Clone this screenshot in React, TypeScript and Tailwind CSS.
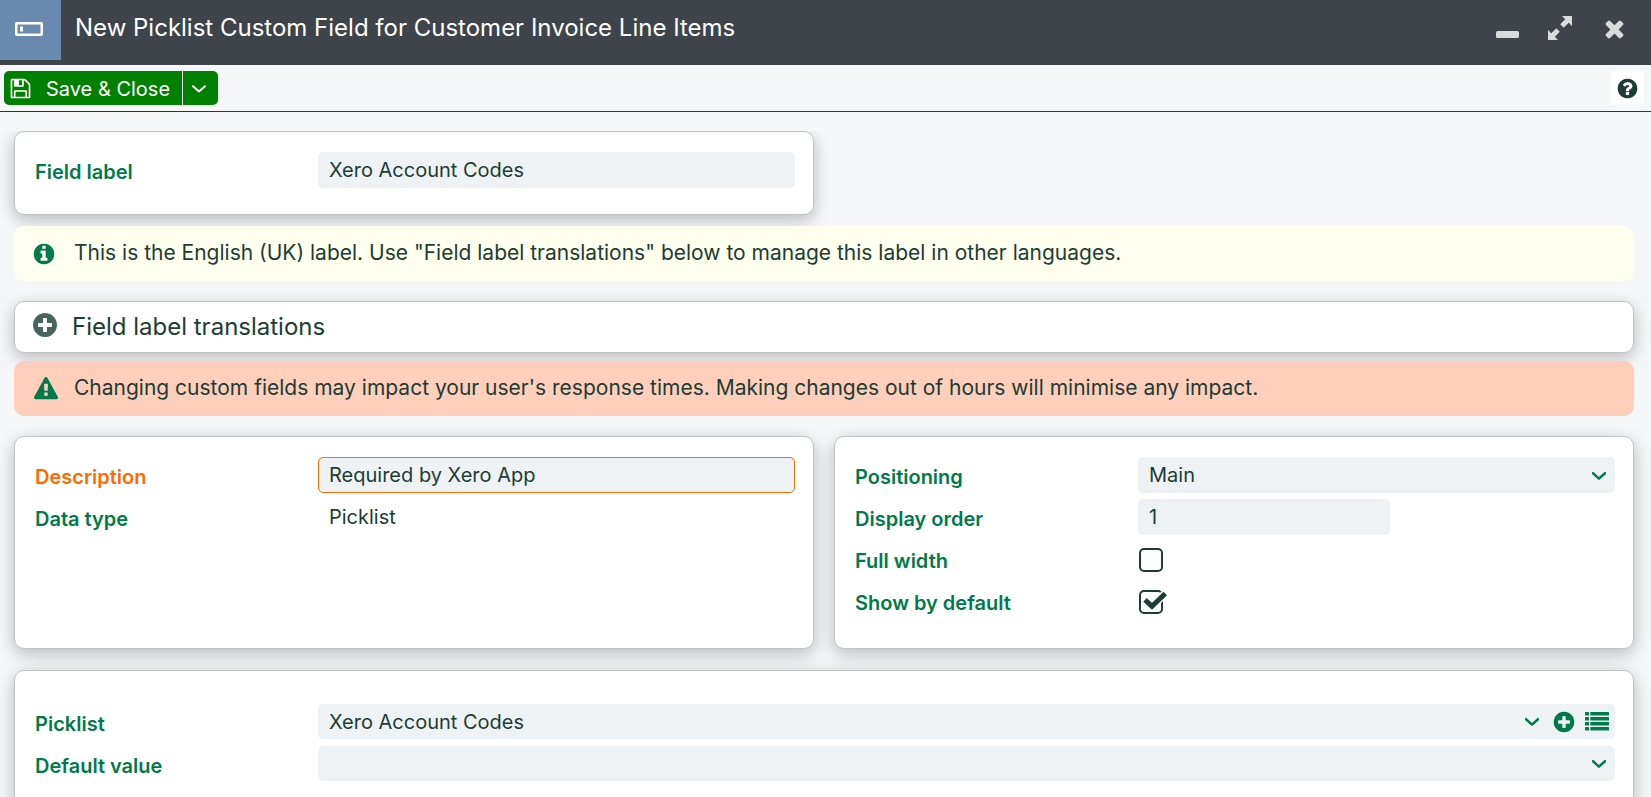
import React, { useState } from "react";

const CIRCLE =
  "q0 209-103 385.500t-279.500 279.500-385.500 103-385.500-103-279.500-279.500-103-385.500 103-385.500 279.500-279.500 385.500-103 385.500 103 279.500 279.500 103 385.500z";

const ICONS = {
  times:
    "M1490 1322q0 40-28 68l-136 136q-28 28-68 28t-68-28l-294-294-294 294q-28 28-68 28t-68-28l-136-136q-28-28-28-68t28-68l294-294-294-294q-28-28-28-68t28-68l136-136q28-28 68-28t68 28l294 294 294-294q28-28 68-28t68 28l136 136q28 28 28 68t-28 68l-294 294 294 294q28 28 28 68z",
  save: "M512 1536h768v-384h-768v384zm896 0h128v-896q0-14-10-38.500t-20-34.500l-281-281q-10-10-34-20t-39-10v416q0 40-28 68t-68 28h-576q-40 0-68-28t-28-68v-416h-128v1280h128v-416q0-40 28-68t68-28h832q40 0 68 28t28 68v416zm-384-928v-320q0-13-9.500-22.500t-22.500-9.500h-192q-13 0-22.500 9.500t-9.500 22.500v320q0 13 9.500 22.500t22.500 9.500h192q13 0 22.500-9.500t9.500-22.500zm640 32v928q0 40-28 68t-68 28h-1344q-40 0-68-28t-28-68v-1344q0-40 28-68t68-28h928q40 0 88 20t76 48l280 280q28 28 48 76t20 88z",
  info:
    "M1152 1376v-160q0-14-9-23t-23-9h-96v-512q0-14-9-23t-23-9h-320q-14 0-23 9t-9 23v160q0 14 9 23t23 9h96v320h-96q-14 0-23 9t-9 23v160q0 14 9 23t23 9h448q14 0 23-9t9-23zm-128-896v-160q0-14-9-23t-23-9h-192q-14 0-23 9t-9 23v160q0 14 9 23t23 9h192q14 0 23-9t9-23zm640 416" +
    CIRCLE,
  plus:
    "M1344 960v-128q0-26-19-45t-45-19h-256v-256q0-26-19-45t-45-19h-128q-26 0-45 19t-19 45v256h-256q-26 0-45 19t-19 45v128q0 26 19 45t45 19h256v256q0 26 19 45t45 19h128q26 0 45-19t19-45v-256h256q26 0 45-19t19-45zm320-64" +
    CIRCLE,
  help:
    "M1024 1376v-192q0-14-9-23t-23-9h-192q-14 0-23 9t-9 23v192q0 14 9 23t23 9h192q14 0 23-9t9-23zm256-672q0-88-55.500-163t-138.500-116-170-41q-243 0-371 213-15 24 8 42l132 100q7 6 19 6 16 0 25-12 53-68 86-92 34-24 86-24 48 0 85.500 26t37.500 59q0 38-20 61t-68 45q-63 28-115.500 86.500t-52.500 125.500v36q0 14 9 23t23 9h192q14 0 23-9t9-23q0-19 21.500-49.500t54.500-49.500q32-18 49-28.500t46-35 44.500-48 28-60.500 12.500-81zm384 192" +
    CIRCLE,
  warning:
    "M1024 1375v-190q0-14-9.500-23.500t-22.500-9.500h-192q-13 0-22.500 9.500t-9.500 23.500v190q0 14 9.500 23.500t22.500 9.500h192q13 0 22.500-9.500t9.500-23.500zm-2-374l18-459q0-12-10-19-13-11-24-11h-220q-11 0-24 11-10 7-10 21l17 457q0 10 10 16.500t24 6.500h185q14 0 23.500-6.500t10.500-16.500zm-14-934l768 1408q35 63-2 126-17 29-46.500 46t-63.500 17h-1536q-34 0-63.500-17t-46.500-46q-37-63-2-126l768-1408q17-31 47-49t65-18 65 18 47 49z",
};

function Icon({ name, className }: { name: keyof typeof ICONS; className: string }) {
  return (
    <svg className={className} viewBox="0 0 1792 1792" fill="currentColor" aria-hidden="true">
      <path d={ICONS[name]} />
    </svg>
  );
}

function Chevron({ className }: { className: string }) {
  return (
    <svg className={className} viewBox="0 0 14 8" fill="none" stroke="currentColor" aria-hidden="true">
      <path d="M1 1.200 7 6.600 13 1.200" strokeLinecap="round" strokeLinejoin="round" />
    </svg>
  );
}

interface RowProps {
  id?: string;
  label: string;
  required?: boolean;
  children: React.ReactNode;
}

function Row({ id, label, required, children }: RowProps) {
  const color = required ? "text-[#ff6a00]" : "text-[#007a4b]";
  return (
    <div className="flex h-9">
      <label htmlFor={id} className={`w-[283px] shrink-0 pt-1 leading-8 font-semibold ${color}`}>
        {label}
      </label>
      <div className="min-w-0 flex-1">{children}</div>
    </div>
  );
}

const card = "rounded-[10px] border border-[#c0c2c4] bg-white shadow-[0_5px_18px_rgba(0,0,0,0.25)]";
const field = "rounded-[5px] bg-[#eef2f5] text-[#1d3c34] outline-none";

function Checkbox({ id, checked, onChange }: { id: string; checked: boolean; onChange: (value: boolean) => void }) {
  return (
    <div className="relative flex h-9 items-center pt-[2px]">
      <input
        id={id}
        type="checkbox"
        checked={checked}
        onChange={(event) => onChange(event.target.checked)}
        className="ml-px size-6 appearance-none rounded-[5px] border-2 border-[#1d3c34] bg-white"
      />
      {checked && (
        <svg className="pointer-events-none absolute top-[6px] left-px h-[26px] w-[30px]" viewBox="0 0 30 26" aria-hidden="true">
          <path d="M7 11.500 13 17.500 25.500 5" fill="none" stroke="#fff" strokeWidth="8" />
          <path d="M6 10.800 13 17.300 26.300 4.500" fill="none" stroke="#1d3c34" strokeWidth="5" />
        </svg>
      )}
    </div>
  );
}

function App() {
  const [label, setLabel] = useState("Xero Account Codes");
  const [description, setDescription] = useState("Required by Xero App");
  const [order, setOrder] = useState("1");
  const [fullWidth, setFullWidth] = useState(false);
  const [showByDefault, setShowByDefault] = useState(true);

  return (
    <div className="flex h-screen flex-col overflow-hidden bg-[#f5f7f9] font-['Inter','Liberation_Sans',sans-serif] text-[20px] text-[#1d3c34]">
      <header className="flex h-[65px] shrink-0 items-start bg-[#3e444a] text-white">
        <div className="flex h-[60px] w-[61px] items-center justify-center bg-[#698aae] pr-[3px] pb-[3px]">
          <svg className="h-[14px] w-7" viewBox="0 0 28 14" aria-hidden="true">
            <rect x="1.250" y="1.250" width="25.500" height="11.500" rx="0.500" fill="none" stroke="#fff" strokeWidth="2.500" />
            <rect x="5" y="4.500" width="3" height="5" fill="#fff" />
          </svg>
        </div>
        <h1 className="flex-1 pl-[14px] text-[24px] leading-[56px]">New Picklist Custom Field for Customer Invoice Line Items</h1>
        <div className="flex h-14 items-center gap-[29px] pr-[23px] text-[#d9dadb]">
          <button type="button" title="Minimise" className="flex h-6 items-end">
            <svg className="h-[11px] w-[23px]" viewBox="0 0 23 11" fill="currentColor" aria-hidden="true">
              <rect y="2" width="23" height="7" rx="1.500" />
            </svg>
          </button>
          <button type="button" title="Full screen">
            <svg className="size-6" viewBox="0 0 24 24" fill="currentColor" aria-hidden="true">
              <path d="M14 0h9.500q.5 0 .5.500V10l-3.300-3.200-5 5L12.200 8.300l5-5zM10 24H.5q-.5 0-.5-.5V14l3.300 3.200 5-5 3.500 3.500-5 5z" />
            </svg>
          </button>
          <button type="button" title="Close">
            <Icon name="times" className="size-[27px]" />
          </button>
        </div>
      </header>

      <div className="flex h-[47px] shrink-0 items-center border-b border-[#1d3c34] pr-[7px] pl-1">
        <button type="button" className="flex h-[34px] w-[178px] items-center gap-[14px] rounded-l-[5px] bg-[#008000] pt-px pl-[5px] text-white">
          <Icon name="save" className="size-[23px]" />
          Save &amp; Close
        </button>
        <button type="button" title="More save options" className="ml-px flex h-[34px] w-[35px] items-center justify-center rounded-r-[5px] bg-[#008000] pt-px pr-[3px] text-white">
          <Chevron className="h-2 w-[14px] stroke-2" />
        </button>
        <button type="button" title="Help" className="ml-auto flex h-[34px] w-[33px] items-center justify-center rounded-[5px] bg-white pt-px">
          <Icon name="help" className="size-[23px]" />
        </button>
      </div>

      <main className="flex-1 overflow-hidden pt-[19px] pr-[17px] pl-[14px]">
        <div className="grid grid-cols-2 gap-5">
          <section className={`${card} pt-5 pr-[18px] pb-[26px] pl-5 [clip-path:inset(0_-24px_-24px_-24px)]`}>
            <Row id="label" label="Field label">
              <input id="label" value={label} onChange={(event) => setLabel(event.target.value)} className={`${field} h-9 w-full px-[11px]`} />
            </Row>
          </section>
        </div>

        <div className="relative mt-[11px] flex h-[55px] items-center rounded-[10px] bg-[#fffff0] pl-[18px]">
          <Icon name="info" className="size-6 text-[#007a4b]" />
          <p className="pb-[2px] pl-[18px] text-[21px]">This is the English (UK) label. Use "Field label translations" below to manage this label in other languages.</p>
        </div>

        <section className={`${card} mt-5`}>
          <button type="button" className="flex h-[50px] w-full items-center gap-[13px] pl-4 text-left text-[24px]">
            <Icon name="plus" className="mb-1 size-7 text-[#4a635c]" />
            Field label translations
          </button>
        </section>

        <div className="mt-2 flex h-[55px] items-center rounded-[10px] bg-[#ffcfbb] pl-5">
          <Icon name="warning" className="size-6 text-[#007a4b]" />
          <p className="pb-[2px] pl-4 text-[21px]">Changing custom fields may impact your user's response times. Making changes out of hours will minimise any impact.</p>
        </div>

        <div className="mt-5 grid grid-cols-2 gap-5">
          <section className={`${card} flex flex-col gap-[6px] pt-5 pr-[18px] pb-6 pl-5`}>
            <Row id="description" label="Description" required>
              <input
                id="description"
                value={description}
                onChange={(event) => setDescription(event.target.value)}
                className={`${field} h-9 w-full border border-[#ff6a00] px-[10px]`}
              />
            </Row>
            <Row label="Data type">
              <p className="px-[11px] leading-9">Picklist</p>
            </Row>
          </section>
          <section className={`${card} flex flex-col gap-[6px] pt-5 pr-[18px] pb-[29px] pl-5`}>
            <Row id="positioning" label="Positioning">
              <div className="relative">
                <select id="positioning" className={`${field} h-9 w-full appearance-none px-[11px]`}>
                  <option>Main</option>
                </select>
                <Chevron className="pointer-events-none absolute top-[15px] right-[9px] h-2 w-[14px] stroke-[2.5] text-[#007a4b]" />
              </div>
            </Row>
            <Row id="order" label="Display order">
              <input id="order" value={order} onChange={(event) => setOrder(event.target.value)} className={`${field} h-9 w-[252px] px-[11px]`} />
            </Row>
            <Row id="full-width" label="Full width">
              <Checkbox id="full-width" checked={fullWidth} onChange={setFullWidth} />
            </Row>
            <Row id="show-default" label="Show by default">
              <Checkbox id="show-default" checked={showByDefault} onChange={setShowByDefault} />
            </Row>
          </section>
        </div>

        <section className={`${card} mt-[21px] flex flex-col gap-[6px] pt-[33px] pr-[18px] pb-10 pl-5`}>
          <Row id="picklist" label="Picklist">
            <div className="flex h-[35px] items-center rounded-[5px] bg-[#eef2f5] pr-[6px] text-[#007a4b]">
              <div className="relative flex-1">
                <select id="picklist" className={`${field} h-[35px] w-full appearance-none px-[11px]`}>
                  <option>Xero Account Codes</option>
                </select>
                <Chevron className="pointer-events-none absolute top-[14px] right-[13px] h-2 w-[14px] stroke-[2.5]" />
              </div>
              <button type="button" title="Add picklist">
                <Icon name="plus" className="size-6" />
              </button>
              <button type="button" title="Choose from list" className="ml-[9px]">
                <svg className="h-5 w-6" viewBox="0 0 24 20" fill="currentColor" aria-hidden="true">
                  {[0, 5, 10, 15].map((y) => (
                    <g key={y}>
                      <rect y={y} width="4" height="3.500" rx="0.500" />
                      <rect x="5.300" y={y} width="18.700" height="3.500" rx="0.500" />
                    </g>
                  ))}
                </svg>
              </button>
            </div>
          </Row>
          <Row id="default-value" label="Default value">
            <div className="relative">
              <select id="default-value" defaultValue="" className={`${field} h-[35px] w-full appearance-none px-[11px]`}>
                <option value=""></option>
              </select>
              <Chevron className="pointer-events-none absolute top-[14px] right-[9px] h-2 w-[14px] stroke-[2.5] text-[#007a4b]" />
            </div>
          </Row>
        </section>
      </main>
    </div>
  );
}

export default App;
